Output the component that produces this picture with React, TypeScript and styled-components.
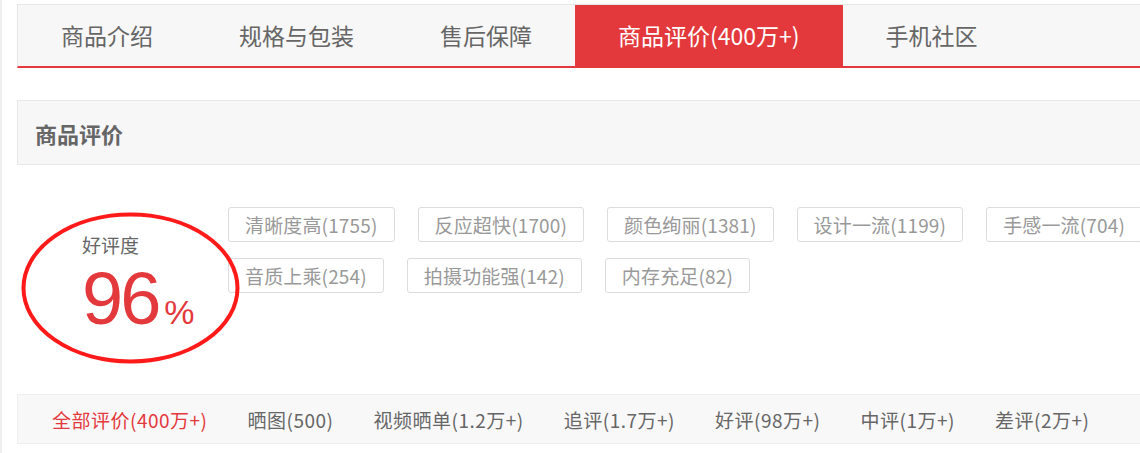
import styled, { createGlobalStyle } from "styled-components";

const GlobalStyle = createGlobalStyle`
  html, body {
    margin: 0;
    padding: 0;
    background: #fff;
    overflow: hidden;
  }
  body {
    font-family: "Noto Sans CJK SC", "Noto Sans", sans-serif;
  }
`;

const Page = styled.div`
  position: relative;
  height: 453px;
  padding: 4px 0 0 15px;
  box-sizing: border-box;
  border-left: 2px solid #efefef;
`;

const Container = styled.div`
  width: 1200px;
`;

const TabBar = styled.div`
  display: flex;
  height: 64px;
  box-sizing: border-box;
  background-color: #f7f7f7;
  border-top: 1px solid #e6e6e6;
  border-left: 1px solid #e6e6e6;
  border-bottom: 2px solid #e4393c;
`;

const Tab = styled.div<{ $active?: boolean }>`
  padding: 0 43px;
  line-height: 61px;
  font-size: 23px;
  white-space: nowrap;
  color: ${(p) => (p.$active ? "#fff" : "#666")};
  background-color: ${(p) => (p.$active ? "#e4393c" : "transparent")};
`;

const SectionHeader = styled.div`
  margin-top: 32px;
  height: 65px;
  box-sizing: border-box;
  display: flex;
  align-items: center;
  padding-left: 17px;
  background-color: #f7f7f7;
  border: 1px solid #e8e8e8;
  border-right: none;
  font-size: 22px;
  font-weight: bold;
  color: #666;
`;

const SummaryRow = styled.div`
  display: flex;
  height: 229px;
  box-sizing: border-box;
  padding-top: 42px;
`;

const Rating = styled.div`
  width: 211px;
  box-sizing: border-box;
  padding: 25px 0 0 65px;
`;

const RatingLabel = styled.div`
  font-size: 19px;
  line-height: 26px;
  color: #666;
`;

const RatingValue = styled.div`
  display: flex;
  align-items: baseline;
  margin-top: 5px;
  color: #e4393c;
  font-family: "Liberation Sans", Arial, sans-serif;
`;

const Percent = styled.span`
  font-size: 74px;
  line-height: 72px;
  letter-spacing: -3px;
`;

const PercentSign = styled.span`
  font-size: 34px;
  margin-left: 6px;
`;

const TagList = styled.div`
  width: 940px;
  display: flex;
  flex-wrap: wrap;
  align-content: flex-start;
  gap: 16px 23px;
`;

const Tag = styled.span`
  height: 35px;
  box-sizing: border-box;
  padding: 0 16px;
  display: inline-flex;
  align-items: center;
  border: 1px solid #dcdcdc;
  border-radius: 3px;
  font-size: 19px;
  letter-spacing: 0.15px;
  color: #999;
  white-space: nowrap;
`;

const FilterBar = styled.div`
  height: 50px;
  box-sizing: border-box;
  display: flex;
  align-items: center;
  gap: 40px;
  padding-left: 34px;
  background-color: #f8f8f8;
  border: 1px solid #eeeeee;
  border-right: none;
`;

const FilterItem = styled.span<{ $active?: boolean }>`
  font-size: 19px;
  letter-spacing: 0.5px;
  white-space: nowrap;
  color: ${(p) => (p.$active ? "#e4393c" : "#666")};
`;

const Annotation = styled.svg`
  position: absolute;
  left: 18px;
  top: 212px;
  pointer-events: none;
`;

const tabs = ["商品介绍", "规格与包装", "售后保障", "商品评价(400万+)", "手机社区"];

const tags = [
  "清晰度高(1755)",
  "反应超快(1700)",
  "颜色绚丽(1381)",
  "设计一流(1199)",
  "手感一流(704)",
  "音质上乘(254)",
  "拍摄功能强(142)",
  "内存充足(82)",
];

const filters = [
  "全部评价(400万+)",
  "晒图(500)",
  "视频晒单(1.2万+)",
  "追评(1.7万+)",
  "好评(98万+)",
  "中评(1万+)",
  "差评(2万+)",
];

export default function App() {
  return (
    <>
      <GlobalStyle />
      <Page>
        <Container>
          <TabBar>
            {tabs.map((t, i) => (
              <Tab key={t} $active={i === 3}>
                {t}
              </Tab>
            ))}
          </TabBar>

          <SectionHeader>商品评价</SectionHeader>

          <SummaryRow>
            <Rating>
              <RatingLabel>好评度</RatingLabel>
              <RatingValue>
                <Percent>96</Percent>
                <PercentSign>%</PercentSign>
              </RatingValue>
            </Rating>
            <TagList>
              {tags.map((t) => (
                <Tag key={t}>{t}</Tag>
              ))}
            </TagList>
          </SummaryRow>

          <FilterBar>
            {filters.map((f, i) => (
              <FilterItem key={f} $active={i === 0}>
                {f}
              </FilterItem>
            ))}
          </FilterBar>
        </Container>

        <Annotation width="221" height="152" viewBox="0 0 221 152">
          <ellipse
            cx="110.5"
            cy="76"
            rx="107"
            ry="73.5"
            fill="none"
            stroke="#ff1a1a"
            strokeWidth="4"
          />
        </Annotation>
      </Page>
    </>
  );
}
